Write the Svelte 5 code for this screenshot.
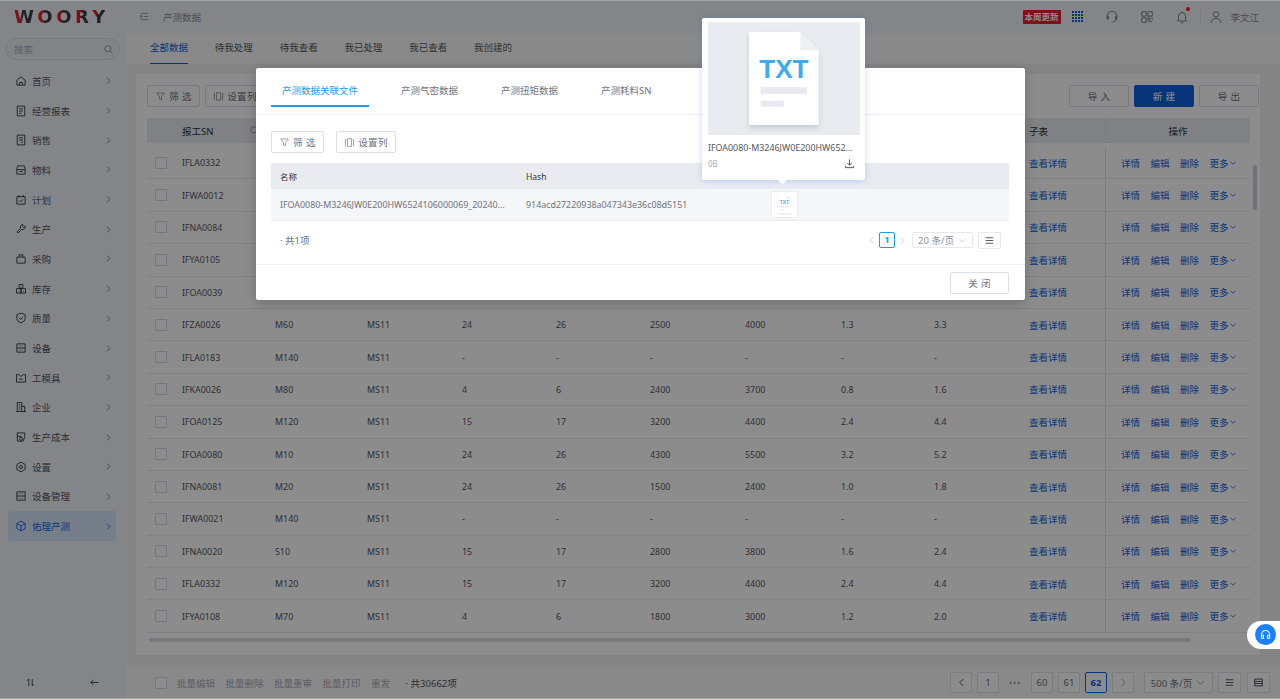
<script lang="ts">
  const menu = [
    { name: '首页', d: 'M2.5 7 8 2.5 13.5 7v6.5h-11zM6 13.5V10h4v3.5' },
    { name: '经营报表', d: 'M3 1.5h10v13H3zM5.5 5h5M5.5 8h5M5.5 11h3' },
    { name: '销售', d: 'M3 1.5h10v13H3zM5.5 5h5M5.5 8h5M8 11h2.5' },
    { name: '物料', d: 'M3.5 2.5h9l1 3v8h-11v-8zM2.5 7.5h11M6 10h4' },
    { name: '计划', d: 'M2.5 3.5h11v10h-11zM5 1.5v3M11 1.5v3M5.5 8.5l2 2 3-3.5' },
    { name: '生产', d: 'M10.5 2a3.5 3.5 0 0 0-3 5L2.5 12l1.5 1.5 5-5a3.5 3.5 0 0 0 4.5-4.5L11.500 6 10 4.500z' },
    { name: '采购', d: 'M2.5 5.500h11v8h-11zM5.500 5.500V2.500h5v3' },
    { name: '库存', d: 'M5.500 2h5v5h-5zM2 7.500h6v6H2zM8 7.500h6v6H8zM8 4.500v1M5 10.500v1M11 10.500v1' },
    { name: '质量', d: 'M8 1.500l5.500 2v5c0 3-2.500 5-5.500 6-3-1-5.500-3-5.500-6v-5zM5.500 8l2 2 3-3.500' },
    { name: '设备', d: 'M2.500 2.500h11v11h-11zM2.500 8h11M6 5.200h1M9 5.200h1M6 10.800h1M9 10.800h1' },
    { name: '工模具', d: 'M2 3.500h3L8 6l3-2.500h3v10H2zM5.500 9.500h5' },
    { name: '企业', d: 'M3 14V2h6v12M9 7h4v7M1.500 14h13M5 5h2M5 8h2M5 11h2' },
    { name: '生产成本', d: 'M3 2.500h10v5l-2 6H3zM3 7h6M6 10.500a2 2 0 1 0 4 0 2 2 0 1 0-4 0' },
    { name: '设置', d: 'M8 1.500l5.500 3.200v6.600L8 14.500l-5.500-3.200V4.700zM6 8a2 2 0 1 0 4 0 2 2 0 1 0-4 0' },
    { name: '设备管理', d: 'M2.500 2.500h11v11h-11zM2.500 8h11M6 5.200h1M9 5.200h1M6 10.800h1M9 10.800h1' },
    { name: '佑理产测', d: 'M8 1.500l5.500 3.200v6.600L8 14.500l-5.500-3.200V4.700zM2.500 4.700 8 8l5.500-3.300M8 8v6.500' },
  ];

  const tabs = ['全部数据', '待我处理', '待我查看', '我已处理', '我已查看', '我创建的'];
  const dash = ['-', '-', '-', '-', '-', '-'];
  const rows = [
    ['IFLA0332', 'M120', 'MS11', '15', '17', '3200', '4400', '2.4', '4.4'],
    ['IFWA0012', 'M60', 'MS11', '24', '26', '2500', '4000', '1.3', '3.3'],
    ['IFNA0084', 'M20', 'MS11', '24', '26', '1500', '2400', '1.0', '1.8'],
    ['IFYA0105', 'M70', 'MS11', '4', '6', '1800', '3000', '1.2', '2.0'],
    ['IFOA0039', 'M10', 'MS11', '24', '26', '4300', '5500', '3.2', '5.2'],
    ['IFZA0026', 'M60', 'MS11', '24', '26', '2500', '4000', '1.3', '3.3'],
    ['IFLA0183', 'M140', 'MS11', ...dash],
    ['IFKA0026', 'M80', 'MS11', '4', '6', '2400', '3700', '0.8', '1.6'],
    ['IFOA0125', 'M120', 'MS11', '15', '17', '3200', '4400', '2.4', '4.4'],
    ['IFOA0080', 'M10', 'MS11', '24', '26', '4300', '5500', '3.2', '5.2'],
    ['IFNA0081', 'M20', 'MS11', '24', '26', '1500', '2400', '1.0', '1.8'],
    ['IFWA0021', 'M140', 'MS11', ...dash],
    ['IFNA0020', 'S10', 'MS11', '15', '17', '2800', '3800', '1.6', '2.4'],
    ['IFLA0332', 'M120', 'MS11', '15', '17', '3200', '4400', '2.4', '4.4'],
    ['IFYA0108', 'M70', 'MS11', '4', '6', '1800', '3000', '1.2', '2.0'],
  ];

  const batch = ['批量编辑', '批量删除', '批量重审', '批量打印', '重发'];
  const dialogTabs = ['产测数据关联文件', '产测气密数据', '产测扭矩数据', '产测耗料SN'];
  const logo = ['W', 'O', 'O', 'R', 'Y'];
</script>

{#snippet filterBtn()}
  <button class="btn t-filter">
    <svg viewBox="0 0 16 16" class="ico"><path d="M2.500 3h11L9.500 8v5l-3-1.500V8z" /></svg>
    筛 选
  </button>
{/snippet}

{#snippet columnsBtn()}
  <button class="btn t-cols">
    <svg viewBox="0 0 16 16" class="ico"><path d="M2 2.500v11M14 2.500v11M5 2.500h6v11H5z" /></svg>
    设置列
  </button>
{/snippet}

{#snippet lines()}
  <svg viewBox="0 0 16 16" class="ico dark"><path d="M2.500 4h11M2.500 8h11M2.500 12h11" /></svg>
{/snippet}

{#snippet txtDoc()}
  <svg viewBox="0 0 76 100" class="doc">
    <path d="M2 3a1 1 0 0 1 1-1h52l19 19v76a1 1 0 0 1-1 1H3a1 1 0 0 1-1-1z" fill="#fff" class="sheet" />
    <path d="M55 2v19h19z" fill="#eef0f4" />
    <text x="38" y="50" text-anchor="middle" class="doc-txt">TXT</text>
    <rect x="14" y="59" width="48" height="7" fill="#e8eaf0" />
    <rect x="14" y="73" width="24" height="6" fill="#e8eaf0" />
  </svg>
{/snippet}

<div class="page">
  <aside class="side">
    <div class="logo">
      {#each logo as l}<span>{l}</span>{/each}
    </div>
    <div class="search">
      <span>搜索</span>
      <svg viewBox="0 0 16 16" class="ico"><path d="M2.500 7a4.500 4.500 0 1 0 9 0 4.500 4.500 0 1 0-9 0M10.500 10.500 14 14" /></svg>
    </div>
    <nav class="menu">
      {#each menu as item, i}
        <div class="item" class:active={i === menu.length - 1}>
          <svg viewBox="0 0 16 16" class="ico"><path d={item.d} /></svg>
          <span class="label">{item.name}</span>
          <svg viewBox="0 0 16 16" class="chev"><path d="M5.500 3l5 5-5 5" /></svg>
        </div>
      {/each}
    </nav>
    <div class="side-foot">
      <svg viewBox="0 0 16 16" class="ico dark"><path d="M5.500 13V3L3 5.500M10.500 3v10L13 10.500" /></svg>
      <svg viewBox="0 0 16 16" class="ico dark"><path d="M14 8H2.500M6.500 4l-4 4 4 4" /></svg>
    </div>
  </aside>

  <main class="main">
    <header class="top">
      <svg viewBox="0 0 16 16" class="ico"><path d="M2.500 3.500h11M7 8h6.500M2.500 12.500h11M2.500 6l2.500 2-2.500 2z" /></svg>
      <span class="crumb">产测数据</span>
      <span class="grow"></span>
      <span class="tag">本周更新</span>
      <span class="dots">
        {#each Array(16) as _}<i></i>{/each}
      </span>
      <svg viewBox="0 0 16 16" class="top-ico head"><path d="M2.500 9V7a5.500 5.500 0 0 1 11 0v2M2.500 7.500v3h1.500v-3zM12 7.500v3h1.500v-3zM12.500 10.500c0 2-1.500 3-3.500 3" /></svg>
      <svg viewBox="0 0 16 16" class="top-ico qr"><path d="M2 2h5v5H2zM9 2h5v5H9zM2 9h5v5H2zM9 9h2v2H9zM13 9h1v2M9 13h5" /></svg>
      <span class="bell">
        <svg viewBox="0 0 16 16" class="top-ico"><path d="M3 12.500h10l-1-2V7a4 4 0 0 0-8 0v3.500zM8 1.500V3M6.500 14.500h3" /></svg>
        <i></i>
      </span>
      <span class="vline"></span>
      <svg viewBox="0 0 16 16" class="top-ico"><path d="M5 5a3 3 0 1 0 6 0 3 3 0 1 0-6 0M2.500 14.500c.5-3.500 3-5 5.500-5s5 1.500 5.500 5" /></svg>
      <span class="user">李文江</span>
    </header>

    <div class="tabs">
      {#each tabs as t, i}
        <span class="tab" class:on={i === 0}>{t}</span>
      {/each}
    </div>

    <section class="body">
      <div class="card">
        <div class="toolbar">
          {@render filterBtn()}
          {@render columnsBtn()}
          <span class="grow"></span>
          <button class="btn wide">导 入</button>
          <button class="btn wide primary">新 建</button>
          <button class="btn wide">导 出</button>
        </div>

        <div class="tbl">
          <div class="tr th">
            <span></span>
            <span class="sn">报工SN
              <svg viewBox="0 0 16 16" class="ico"><path d="M2.500 7a4.500 4.500 0 1 0 9 0 4.500 4.500 0 1 0-9 0M10.500 10.500 14 14" /></svg>
            </span>
            <span></span><span></span><span></span><span></span><span></span><span></span><span></span><span></span>
            <span>子表</span>
            <span class="ops-head">操作</span>
          </div>
          {#each rows as r}
            <div class="tr">
              <span><i class="check"></i></span>
              {#each r as c}<span class="cell">{c}</span>{/each}
              <span class="link">查看详情</span>
              <span class="ops">
                <a>详情</a><a>编辑</a><a>删除</a><a>更多<svg viewBox="0 0 16 16" class="more"><path d="M3 5.500l5 5 5-5" /></svg></a>
              </span>
            </div>
          {/each}
        </div>
        <div class="hbar"></div>
        <div class="vbar"></div>
      </div>
    </section>

    <footer class="foot">
      <i class="check"></i>
      {#each batch as b}<span class="batch">{b}</span>{/each}
      <span class="total">· 共30662项</span>
      <span class="grow"></span>
      <span class="pg"><svg viewBox="0 0 16 16" class="ico dark"><path d="M10.500 3l-5 5 5 5" /></svg></span>
      <span class="pg">1</span>
      <span class="ell">•••</span>
      <span class="pg">60</span>
      <span class="pg">61</span>
      <span class="pg cur">62</span>
      <span class="pg"><svg viewBox="0 0 16 16" class="ico"><path d="M5.500 3l5 5-5 5" /></svg></span>
      <span class="pg size">500 条/页 <svg viewBox="0 0 16 16" class="ico"><path d="M3 5.500l5 5 5-5" /></svg></span>
      <span class="pg end">{@render lines()}</span>
      <span class="pg end last"><svg viewBox="0 0 16 16" class="ico dark"><path d="M2.500 3h11v10h-11zM2.500 6.500h11M2.500 9.500h11" /></svg></span>
    </footer>
  </main>

  <div class="mask">
    <div class="dialog">
      <div class="d-tabs">
        {#each dialogTabs as t, i}
          <span class="d-tab" class:on={i === 0}>{t}</span>
        {/each}
      </div>
      <div class="d-tools">
        {@render filterBtn()}
        {@render columnsBtn()}
      </div>
      <div class="d-table">
        <div class="d-row d-head">
          <span>名称</span><span>Hash</span><span></span>
        </div>
        <div class="d-row d-data">
          <span class="ellip">IFOA0080-M3246JW0E200HW6524106000069_202406181230000.txt</span>
          <span>914acd27220938a047343e36c08d5151</span>
          <span class="thumb">{@render txtDoc()}</span>
        </div>
      </div>
      <div class="d-pager">
        <span>· 共1项</span>
        <span class="grow"></span>
        <svg viewBox="0 0 16 16" class="ico"><path d="M10.500 3l-5 5 5 5" /></svg>
        <span class="d-cur">1</span>
        <svg viewBox="0 0 16 16" class="ico"><path d="M5.500 3l5 5-5 5" /></svg>
        <span class="d-size">20 条/页 <svg viewBox="0 0 16 16" class="ico"><path d="M3 5.500l5 5 5-5" /></svg></span>
        <span class="d-menu">{@render lines()}</span>
      </div>
      <div class="d-foot">
        <button class="btn wide">关 闭</button>
      </div>
    </div>

    <div class="pop">
      <div class="preview">{@render txtDoc()}</div>
      <div class="fname ellip">IFOA0080-M3246JW0E200HW6524106000069_202406181230000.txt</div>
      <div class="meta">
        <span>0B</span>
        <svg viewBox="0 0 16 16" class="ico dark"><path d="M8 2v8M4.500 7 8 10.500 11.500 7M2 11.500v2.500h12v-2.500" /></svg>
      </div>
      <i class="arrow"></i>
    </div>

    <div class="helper">
      <span class="helper-dot">
        <svg viewBox="0 0 16 16"><path d="M3 10V8a5 5 0 0 1 10 0v2M3 9h2.500v3.500H3zM10.500 9H13v3.500h-2.500z" /></svg>
      </span>
    </div>
  </div>
</div>

<style>
  :global(body) {
    margin: 0;
    font-family: "Noto Sans", "Noto Sans CJK SC", sans-serif;
    font-size: 9.5px;
    color: #33353b;
  }

  .page {
    position: relative;
    display: flex;
    width: 1280px;
    height: 699px;
    overflow: hidden;
    background: #f2f4f9;
  }

  .grow {
    flex: 1;
  }

  .ico {
    width: 11px;
    height: 11px;
    flex: none;
    fill: none;
    stroke: #8a8e99;
    stroke-width: 1.2;
  }

  .ico.dark {
    stroke: #33353b;
  }

  /* sidebar */
  .side {
    width: 126px;
    flex: none;
    display: flex;
    flex-direction: column;
    background: #f0f2f8;
  }

  .logo {
    height: 33px;
    box-sizing: border-box;
    padding-left: 14px;
    display: flex;
    align-items: center;
    gap: 3.500px;
    font-family: "DejaVu Sans", sans-serif;
    font-weight: 700;
    font-size: 18px;
    line-height: 1;
  }

  .logo span {
    background: linear-gradient(90deg, #e0202f 42%, #3a3d44 42%);
    -webkit-background-clip: text;
    background-clip: text;
    color: transparent;
  }

  .search {
    margin: 5px 6px 0 5px;
    height: 22px;
    border: 1px solid #dcdfe8;
    border-radius: 11px;
    box-sizing: border-box;
    padding: 0 5px 0 8px;
    display: flex;
    align-items: center;
    justify-content: space-between;
    color: #a9adb8;
    background: #eceef4;
  }

  .menu {
    margin-top: 6px;
    display: grid;
    grid-auto-rows: 29.7px;
    flex: 1;
    align-content: start;
  }

  .item {
    margin: 0 10px 0 8px;
    padding-left: 7px;
    display: flex;
    align-items: center;
    gap: 5px;
    color: #55585f;
    font-size: 9.5px;
  }

  .item .ico {
    width: 12px;
    height: 12px;
    stroke: #33353b;
  }

  .label {
    flex: 1;
  }

  .chev {
    width: 9px;
    height: 9px;
    margin-right: 3px;
    fill: none;
    stroke: #6f737d;
    stroke-width: 1.500;
  }

  .item.active {
    background: #d8e5fb;
    color: #1060dd;
    border-radius: 2px;
  }

  .item.active .ico,
  .item.active .chev {
    stroke: #1060dd;
  }

  .side-foot {
    height: 33px;
    display: flex;
    align-items: center;
    justify-content: space-between;
    padding: 0 26px 0 25px;
  }

  /* top bar */
  .main {
    flex: 1;
    min-width: 0;
    display: flex;
    flex-direction: column;
  }

  .top {
    height: 33px;
    flex: none;
    box-sizing: border-box;
    padding: 0 21px 0 13px;
    display: flex;
    align-items: center;
    color: #6f737d;
    background: #f0f2f8;
  }

  .crumb {
    margin-left: 13px;
    color: #8a8e99;
  }

  .tag {
    width: 38px;
    height: 14px;
    line-height: 14px;
    text-align: center;
    color: #fff;
    font-size: 8.500px;
    font-weight: 700;
    background: #e3222f;
    border-radius: 1px;
  }

  .dots {
    margin: 0 22px 0 11px;
    display: grid;
    grid-template-columns: repeat(4, 2px);
    gap: 1.300px;
  }

  .dots i {
    width: 2px;
    height: 2px;
    background: #1060dd;
  }

  .top-ico {
    width: 14px;
    height: 14px;
    flex: none;
    fill: none;
    stroke: #6f737d;
    stroke-width: 1;
  }

  .head {
    margin-right: 21px;
  }

  .qr {
    margin-right: 21px;
  }

  .bell {
    position: relative;
    display: flex;
  }

  .bell i {
    position: absolute;
    right: -1px;
    top: -3px;
    width: 4px;
    height: 4px;
    border-radius: 50%;
    background: #e3222f;
  }

  .vline {
    width: 1px;
    height: 16px;
    margin: 0 8px 0 11px;
    background: #dfe1e8;
  }

  .user {
    margin-left: 7px;
    color: #8a8e99;
  }

  /* tabs */
  .tabs {
    height: 31px;
    flex: none;
    box-sizing: border-box;
    padding-left: 24px;
    display: flex;
    gap: 26.800px;
    background: #fafafa;
    border-top-left-radius: 6px;
  }

  .tab {
    line-height: 30px;
    color: #55585f;
  }

  .tab.on {
    color: #1060dd;
    border-bottom: 1px solid #1060dd;
  }

  .body {
    flex: 1;
    min-height: 0;
    padding: 10px 20px 11px 10px;
    background: #f1f1f1;
    display: flex;
  }

  .card {
    position: relative;
    flex: 1;
    box-sizing: border-box;
    padding: 11px 10px 0 11px;
    background: #fff;
  }

  .toolbar {
    display: flex;
    gap: 5px;
    height: 22px;
    margin-right: -9px;
  }

  .btn {
    height: 22px;
    box-sizing: border-box;
    padding: 0;
    font: inherit;
    color: #6f737d;
    background: #fff;
    border: 1px solid #dcdfe6;
    border-radius: 2px;
    display: inline-flex;
    align-items: center;
    justify-content: center;
    gap: 3px;
    letter-spacing: 0.3px;
  }

  .t-filter {
    width: 53px;
  }

  .t-cols {
    width: 60px;
  }

  .wide {
    width: 60px;
  }

  .primary {
    background: #1060dd;
    border-color: #1060dd;
    color: #fff;
  }

  .tbl {
    margin-top: 11px;
    width: 1103px;
  }

  .tr {
    display: grid;
    grid-template-columns: 35px 93px 92px 95px 94px 94px 95px 96px 93px 95px 76px 145px;
    height: 32.4px;
    align-items: center;
    border-bottom: 1px solid #ebecef;
    box-sizing: border-box;
    color: #55585f;
  }

  .cell {
    font-size: 8.900px;
  }

  .tr > span:last-child {
    height: 100%;
    border-left: 1px solid #e2e3e7;
    display: flex;
    align-items: center;
  }

  .th {
    height: 25px;
    margin-bottom: 4px;
    background: #e9ebf0;
    border-bottom: 0;
    color: #33353b;
  }

  .sn {
    display: flex;
    justify-content: space-between;
    align-items: center;
    padding-right: 15px;
  }

  .th > .ops-head {
    justify-content: center;
  }

  .check {
    display: block;
    width: 10px;
    height: 10px;
    margin-left: 8px;
    border: 1px solid #d9dbe1;
    border-radius: 1px;
    background: #fff;
  }

  .link,
  .ops a {
    color: #1060dd;
  }

  .ops {
    padding-left: 15px;
    gap: 10.500px;
  }

  .ops a {
    display: inline-flex;
    align-items: center;
  }

  .more {
    width: 8px;
    height: 8px;
    fill: none;
    stroke: #1060dd;
    stroke-width: 1.500;
  }

  .hbar {
    position: absolute;
    left: 13px;
    bottom: 13px;
    width: 1042px;
    height: 4px;
    border-radius: 2px;
    background: #dcdce2;
  }

  .vbar {
    position: absolute;
    right: 3px;
    top: 91px;
    width: 4px;
    height: 45px;
    border-radius: 2px;
    background: #cfd0d6;
  }

  /* bottom bar */
  .foot {
    height: 33px;
    flex: none;
    box-sizing: border-box;
    padding: 0 10px 0 21px;
    display: flex;
    align-items: center;
    background: #fafafa;
  }

  .foot .check {
    margin: 0 10px 0 8px;
  }

  .batch {
    margin-right: 10.500px;
    color: #a9adb8;
  }

  .total {
    margin-left: 5px;
    color: #55585f;
  }

  .pg {
    width: 22px;
    height: 21px;
    margin-left: 5px;
    box-sizing: border-box;
    display: flex;
    align-items: center;
    justify-content: center;
    gap: 3px;
    color: #6f737d;
    background: #fff;
    border: 1px solid #e2e3e8;
    border-radius: 2px;
  }

  .ell {
    width: 32px;
    text-align: center;
    font-size: 8px;
    color: #8a8e99;
    letter-spacing: 1px;
  }

  .ell + .pg {
    margin-left: 0;
  }

  .pg.cur {
    color: #1060dd;
    font-weight: 700;
    border-color: #1060dd;
  }

  .pg.size {
    width: 69px;
    margin-left: 10px;
  }

  .pg.end {
    width: 23px;
  }

  .pg.last {
    margin-left: 6px;
  }

  /* overlay */
  .mask {
    position: absolute;
    inset: 0;
    background: rgba(0, 0, 0, 0.45);
    box-shadow:
      inset 0 1px 0 rgba(255, 255, 255, 0.25),
      inset 0 -1px 0 rgba(255, 255, 255, 0.25);
  }

  .dialog {
    position: absolute;
    left: 256px;
    top: 68px;
    width: 769px;
    height: 232px;
    box-sizing: border-box;
    display: flex;
    flex-direction: column;
    background: #fff;
    border-radius: 2px;
    box-shadow: 0 3px 12px rgba(0, 0, 0, 0.2);
  }

  .d-tabs {
    height: 47px;
    box-sizing: border-box;
    padding-left: 15px;
    display: flex;
    gap: 21px;
    border-bottom: 1px solid #eef0f3;
    flex: none;
  }

  .d-tab {
    padding: 0 11px;
    line-height: 46px;
    height: 37px;
    color: #6f737d;
  }

  .d-tab.on {
    color: #1e9bf0;
    border-bottom: 2px solid #1e9bf0;
  }

  .d-tools {
    margin: 16px 0 0 15px;
    display: flex;
    gap: 12px;
    flex: none;
  }

  .d-table {
    margin: 10px 16px 0 15px;
  }

  .d-row {
    display: grid;
    grid-template-columns: 246px 254px 238px;
    align-items: center;
  }

  .d-row > span {
    padding-left: 9px;
    min-width: 0;
  }

  .d-head {
    height: 26px;
    background: #e9ebf0;
    color: #33353b;
    font-size: 8.500px;
  }

  .d-data {
    height: 32px;
    box-sizing: border-box;
    background: #f5f6f7;
    border-bottom: 1px solid #e9ebf0;
    color: #6f737d;
    font-size: 8.900px;
  }

  .ellip {
    white-space: nowrap;
    overflow: hidden;
    text-overflow: ellipsis;
  }

  .d-row > .ellip {
    padding-right: 8px;
  }

  .d-row > .thumb {
    box-sizing: border-box;
    width: 27px;
    height: 27px;
    padding: 3px 6px;
    display: flex;
    justify-content: center;
    border: 1px solid #eceef1;
    background: #fff;
    border-radius: 2px;
  }

  .doc {
    display: block;
    height: 100%;
    overflow: visible;
  }

  .sheet {
    filter: drop-shadow(0 3px 2.500px rgba(174, 182, 196, 0.6));
  }

  .doc-txt {
    font-family: "Liberation Sans", sans-serif;
    font-weight: 700;
    font-size: 27px;
    fill: #3fa9ef;
  }

  .d-pager {
    height: 44px;
    box-sizing: border-box;
    padding: 0 24px 5px 24px;
    display: flex;
    align-items: center;
    color: #6f737d;
    gap: 3px;
    border-bottom: 1px solid #eef0f3;
    flex: none;
  }

  .d-pager > .ico {
    width: 9px;
    height: 9px;
    stroke: #b5b8c0;
  }

  .d-cur {
    width: 16px;
    height: 16px;
    box-sizing: border-box;
    text-align: center;
    line-height: 14px;
    color: #1e9bf0;
    font-weight: 700;
    border: 1px solid #1e9bf0;
    border-radius: 2px;
  }

  .d-size {
    width: 61px;
    height: 16px;
    margin-left: 2px;
    box-sizing: border-box;
    display: flex;
    align-items: center;
    justify-content: center;
    gap: 4px;
    color: #8a8e99;
    border: 1px solid #e6e8ec;
    border-radius: 2px;
  }

  .d-size .ico {
    width: 9px;
    height: 9px;
    stroke: #b5b8c0;
  }

  .d-menu {
    width: 23px;
    height: 17px;
    margin-left: 2px;
    box-sizing: border-box;
    display: flex;
    align-items: center;
    justify-content: center;
    border: 1px solid #e6e8ec;
    border-radius: 2px;
  }

  .d-foot {
    flex: 1;
    padding: 7px 16px 0 0;
    display: flex;
    justify-content: flex-end;
    align-items: flex-start;
  }

  .d-foot .btn {
    width: 59px;
  }

  /* file popover */
  .pop {
    position: absolute;
    left: 702px;
    top: 18px;
    width: 163px;
    height: 162px;
    box-sizing: border-box;
    padding: 4px 5px 0 6px;
    background: #fff;
    border-radius: 2px;
    box-shadow: 0 1px 6px rgba(30, 110, 230, 0.25);
  }

  .preview {
    height: 113px;
    padding: 8px 0 8px;
    box-sizing: border-box;
    display: flex;
    justify-content: center;
    background: #e9ebf0;
  }

  .fname {
    margin-top: 5px;
    padding-right: 3px;
    line-height: 15px;
    font-size: 8.900px;
    color: #55585f;
  }

  .meta {
    margin-top: 3px;
    padding-right: 5px;
    display: flex;
    align-items: center;
    justify-content: space-between;
    color: #a9adb8;
    font-size: 8px;
  }

  .arrow {
    position: absolute;
    left: 77px;
    bottom: -3px;
    width: 7px;
    height: 7px;
    background: #fff;
    transform: rotate(45deg);
  }

  .helper {
    position: absolute;
    right: 0;
    top: 621px;
    width: 33px;
    height: 28px;
    box-sizing: border-box;
    padding: 3px 0 0 8px;
    background: #fff;
    border-radius: 14px 0 0 14px;
  }

  .helper-dot {
    width: 21px;
    height: 21px;
    display: flex;
    align-items: center;
    justify-content: center;
    border-radius: 50%;
    background: #1a80ff;
  }

  .helper-dot svg {
    width: 13px;
    height: 13px;
    fill: none;
    stroke: #fff;
    stroke-width: 1.300;
  }
</style>
